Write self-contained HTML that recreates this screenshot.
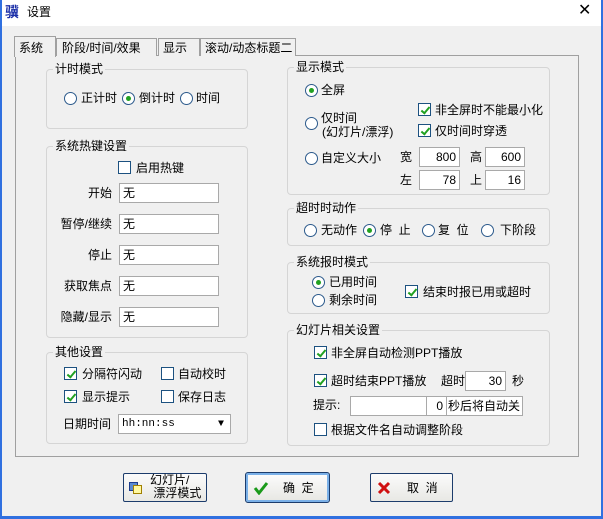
<!DOCTYPE html>
<html><head><meta charset="utf-8"><style>
*{margin:0;padding:0;box-sizing:border-box}
body{width:603px;height:519px;overflow:hidden;background:#f0f0f0;font-family:"Liberation Sans","Noto Sans CJK SC","WenQuanYi Zen Hei",sans-serif;font-size:12px;color:#000;position:relative}
.a{position:absolute;line-height:14px;white-space:nowrap}
.g{position:absolute;border:1px solid #d5d5d5;border-radius:4px}
.gt{position:absolute;background:#f0f0f0;padding:0 2px;line-height:14px;left:6px;top:-8px}
.r{position:absolute;width:13px;height:13px;border:1px solid #2c5a8c;border-radius:50%;background:#fff}
.r.on::after{content:"";position:absolute;left:3px;top:3px;width:5px;height:5px;border-radius:50%;background:#21a121}
.c{position:absolute;width:13px;height:13px;border:1px solid #1c5180;background:#fff}
.c.on::after{content:"";position:absolute;left:4px;top:1px;width:3px;height:7px;border:solid #21a121;border-width:0 2px 2px 0;transform:rotate(40deg)}
.i{position:absolute;border:1px solid #a9a9a9;background:#fff;line-height:18px;padding:0 3px}
.i.rt{text-align:right}
.b{position:absolute;border:1px solid #1c3c6c;border-radius:2px;background:linear-gradient(#fbfbfb,#e8e8e4)}
</style></head><body>
<div style="position:absolute;left:0;top:0;width:603px;height:26px;background:#fff"></div>
<div class="a" style="left:5px;top:5px;color:#1a2ea8;font-size:14px;font-weight:bold">骥</div>
<div class="a" style="left:27px;top:5px">设置</div>
<div class="a" style="left:578px;top:4px;font-size:16px">✕</div>
<div style="position:absolute;left:0;top:0;width:2px;height:519px;background:#3070e0"></div>
<div style="position:absolute;left:601px;top:0;width:2px;height:519px;background:#3070e0"></div>
<div style="position:absolute;left:0;top:516px;width:603px;height:3px;background:#3070e0"></div>

<div style="position:absolute;left:15px;top:55px;width:564px;height:402px;border:1px solid #a0a0a0;background:#f0f0f0"></div>
<div style="position:absolute;left:56px;top:38px;width:101px;height:18px;border:1px solid #a0a0a0;border-bottom:none;background:#f0f0f0"></div>
<div class="a" style="left:62px;top:41px">阶段/时间/效果</div>
<div style="position:absolute;left:158px;top:38px;width:42px;height:18px;border:1px solid #a0a0a0;border-bottom:none;background:#f0f0f0"></div>
<div class="a" style="left:163px;top:41px">显示</div>
<div style="position:absolute;left:200px;top:38px;width:96px;height:18px;border:1px solid #a0a0a0;border-bottom:none;background:#f0f0f0"></div>
<div class="a" style="left:205px;top:41px">滚动/动态标题二</div>
<div style="position:absolute;left:14px;top:36px;width:42px;height:21px;border:1px solid #a0a0a0;border-bottom:none;background:#f0f0f0"></div>
<div class="a" style="left:19px;top:41px">系统</div>

<div class="g" style="left:46px;top:69px;width:202px;height:60px"><span class="gt">计时模式</span></div>
<div class="r" style="left:64px;top:92px"></div><div class="a" style="left:81px;top:91px">正计时</div>
<div class="r on" style="left:122px;top:92px"></div><div class="a" style="left:139px;top:91px">倒计时</div>
<div class="r" style="left:180px;top:92px"></div><div class="a" style="left:196px;top:91px">时间</div>

<div class="g" style="left:46px;top:146px;width:202px;height:192px"><span class="gt">系统热键设置</span></div>
<div class="c" style="left:118px;top:161px"></div><div class="a" style="left:136px;top:161px">启用热键</div>
<div class="a" style="left:46px;width:66px;text-align:right;top:186px">开始</div><div class="i" style="left:119px;top:183px;width:100px;height:20px">无</div>
<div class="a" style="left:46px;width:66px;text-align:right;top:217px">暂停/继续</div><div class="i" style="left:119px;top:214px;width:100px;height:20px">无</div>
<div class="a" style="left:46px;width:66px;text-align:right;top:248px">停止</div><div class="i" style="left:119px;top:245px;width:100px;height:20px">无</div>
<div class="a" style="left:46px;width:66px;text-align:right;top:279px">获取焦点</div><div class="i" style="left:119px;top:276px;width:100px;height:20px">无</div>
<div class="a" style="left:46px;width:66px;text-align:right;top:310px">隐藏/显示</div><div class="i" style="left:119px;top:307px;width:100px;height:20px">无</div>

<div class="g" style="left:46px;top:352px;width:202px;height:92px"><span class="gt">其他设置</span></div>
<div class="c on" style="left:64px;top:367px"></div><div class="a" style="left:82px;top:367px">分隔符闪动</div>
<div class="c" style="left:161px;top:367px"></div><div class="a" style="left:178px;top:367px">自动校时</div>
<div class="c on" style="left:64px;top:390px"></div><div class="a" style="left:82px;top:390px">显示提示</div>
<div class="c" style="left:161px;top:390px"></div><div class="a" style="left:178px;top:390px">保存日志</div>
<div class="a" style="left:63px;top:417px">日期时间</div>
<div class="i" style="left:118px;top:414px;width:113px;height:20px;font-family:'Liberation Mono',monospace;font-size:11px">hh:nn:ss<span style="position:absolute;right:6px;top:1px;font-size:10px">▼</span></div>

<div class="g" style="left:287px;top:67px;width:263px;height:128px"><span class="gt">显示模式</span></div>
<div class="r on" style="left:305px;top:84px"></div><div class="a" style="left:321px;top:83px">全屏</div>
<div class="c on" style="left:418px;top:103px"></div><div class="a" style="left:435px;top:103px">非全屏时不能最小化</div>
<div class="c on" style="left:418px;top:124px"></div><div class="a" style="left:435px;top:124px">仅时间时穿透</div>
<div class="r" style="left:305px;top:117px"></div><div class="a" style="left:321px;top:111px">仅时间</div><div class="a" style="left:322px;top:125px">(幻灯片/漂浮)</div>
<div class="r" style="left:305px;top:152px"></div><div class="a" style="left:321px;top:151px">自定义大小</div>
<div class="a" style="left:400px;top:150px">宽</div><div class="i rt" style="left:419px;top:147px;width:41px;height:20px">800</div>
<div class="a" style="left:470px;top:150px">高</div><div class="i rt" style="left:485px;top:147px;width:40px;height:20px">600</div>
<div class="a" style="left:400px;top:173px">左</div><div class="i rt" style="left:419px;top:170px;width:41px;height:20px">78</div>
<div class="a" style="left:470px;top:173px">上</div><div class="i rt" style="left:485px;top:170px;width:40px;height:20px">16</div>

<div class="g" style="left:287px;top:208px;width:263px;height:38px"><span class="gt">超时时动作</span></div>
<div class="r" style="left:304px;top:224px"></div><div class="a" style="left:321px;top:223px">无动作</div>
<div class="r on" style="left:363px;top:224px"></div><div class="a" style="left:380px;top:223px">停&nbsp;&nbsp;止</div>
<div class="r" style="left:422px;top:224px"></div><div class="a" style="left:438px;top:223px">复&nbsp;&nbsp;位</div>
<div class="r" style="left:481px;top:224px"></div><div class="a" style="left:500px;top:223px">下阶段</div>

<div class="g" style="left:287px;top:262px;width:263px;height:52px"><span class="gt">系统报时模式</span></div>
<div class="r on" style="left:312px;top:276px"></div><div class="a" style="left:329px;top:275px">已用时间</div>
<div class="r" style="left:312px;top:294px"></div><div class="a" style="left:329px;top:293px">剩余时间</div>
<div class="c on" style="left:405px;top:285px"></div><div class="a" style="left:423px;top:285px">结束时报已用或超时</div>

<div class="g" style="left:287px;top:330px;width:263px;height:116px"><span class="gt">幻灯片相关设置</span></div>
<div class="c on" style="left:314px;top:346px"></div><div class="a" style="left:331px;top:346px">非全屏自动检测PPT播放</div>
<div class="c on" style="left:314px;top:374px"></div><div class="a" style="left:331px;top:374px">超时结束PPT播放</div>
<div class="a" style="left:441px;top:374px">超时</div><div class="i rt" style="left:465px;top:371px;width:41px;height:20px">30</div>
<div class="a" style="left:512px;top:374px">秒</div>
<div class="a" style="left:313px;top:398px">提示:</div>
<div class="i" style="left:350px;top:396px;width:97px;height:20px"></div>
<div class="i rt" style="left:426px;top:396px;width:21px;height:20px">0</div>
<div class="i" style="left:446px;top:396px;width:77px;height:20px;padding:0 1px">秒后将自动关</div>
<div class="c" style="left:314px;top:423px"></div><div class="a" style="left:331px;top:423px">根据文件名自动调整阶段</div>

<div class="b" style="left:123px;top:473px;width:84px;height:29px"></div>
<div style="position:absolute;left:129px;top:482px;width:9px;height:9px;background:#5a8ad0;border:1px solid #1c3c8c"></div>
<div style="position:absolute;left:133px;top:485px;width:9px;height:9px;background:#fff8a0;border:1px solid #a08000"></div>
<div class="a" style="left:150px;top:474px;line-height:13px">幻灯片/<br>&nbsp;漂浮模式</div>
<div class="b" style="left:246px;top:473px;width:83px;height:29px;border:2px solid #7ab0e8;outline:1px solid #1c3c6c"></div>
<svg style="position:absolute;left:253px;top:481px" width="16" height="14"><path d="M2 7 L6 12 L14 2" fill="none" stroke="#1a9a1a" stroke-width="3"/></svg>
<div class="a" style="left:283px;top:481px">确&nbsp;&nbsp;定</div>
<div class="b" style="left:370px;top:473px;width:83px;height:29px"></div>
<svg style="position:absolute;left:377px;top:481px" width="14" height="14"><path d="M2 2 L12 12 M12 2 L2 12" stroke="#d01010" stroke-width="3"/></svg>
<div class="a" style="left:407px;top:481px">取&nbsp;&nbsp;消</div>
</body></html>
